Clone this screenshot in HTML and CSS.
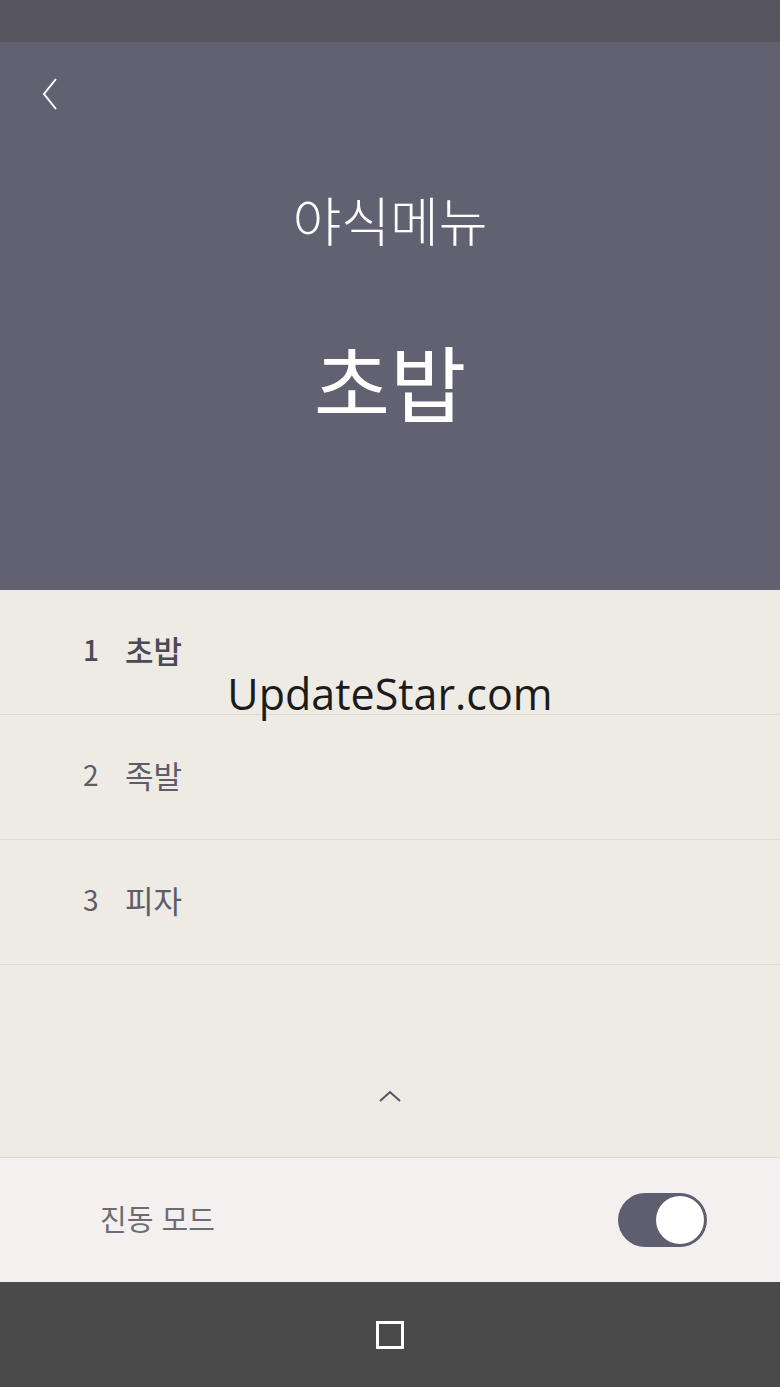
FILE: index.html
```html
<!DOCTYPE html>
<html lang="ko">
<head>
    <meta charset="UTF-8">
    <meta name="viewport" content="width=device-width, initial-scale=1.0">
    <title>야식메뉴</title>
    <link rel="stylesheet" href="styles.css">
</head>
<body>
    <div class="status-bar"></div>
    <div class="header">
        <button class="back-btn">
            <svg width="16" height="32" viewBox="0 0 16 32"><polyline points="14,1 2,16 14,31" fill="none" stroke="#fff" stroke-width="2"/></svg>
        </button>
        <div class="category">야식메뉴</div>
        <div class="picked">초밥</div>
    </div>
    <div class="menu-list">
        <div class="menu-item active"><span class="num">1</span><span class="name">초밥</span></div>
        <div class="menu-item"><span class="num">2</span><span class="name">족발</span></div>
        <div class="menu-item"><span class="num">3</span><span class="name">피자</span></div>
        <div class="list-footer">
            <svg width="22" height="12" viewBox="0 0 22 12"><polyline points="1,11 11,2 21,11" fill="none" stroke="#55545e" stroke-width="2"/></svg>
        </div>
        <div class="watermark">UpdateStar.com</div>
    </div>
    <div class="setting-row">
        <span class="setting-label">진동 모드</span>
        <div class="toggle on"><div class="knob"></div></div>
    </div>
    <div class="nav-bar">
        <div class="home-btn"></div>
    </div>
</body>
</html>
```

FILE: styles.css
```css
/* Layout for the menu picker screen */
body {
    margin: 0;
    width: 780px;
    height: 1387px;
    font-family: "Noto Sans CJK KR", "Noto Sans", sans-serif;
    background: #4a4a4a;
    overflow: hidden;
}
.status-bar {
    height: 42px;
    background: #57565f;
}
.header {
    height: 548px;
    background: #626172;
    display: flex;
    flex-direction: column;
    align-items: center;
    color: #fff;
}
.back-btn {
    align-self: flex-start;
    margin: 36px 0 0 42px;
    padding: 0;
    border: none;
    background: none;
    height: 32px;
}
.back-btn svg {
    display: block;
}
.category {
    margin-top: 79px;
    font-size: 53px;
    font-weight: 300;
    line-height: 60px;
}
.picked {
    margin-top: 86px;
    font-size: 83px;
    font-weight: 400;
    line-height: 90px;
}
.menu-list {
    position: relative;
    background: #eeebe5;
}
.menu-item {
    height: 124px;
    box-sizing: border-box;
    height: 125px;
    border-bottom: 1px solid #dedbd5;
    display: flex;
    align-items: center;
    padding: 0 0 6px 83px;
    font-size: 31px;
    color: #5d5c67;
}
.menu-item .num {
    width: 42px;
    font-size: 28px;
}
.menu-item.active {
    color: #4b4a58;
    font-weight: 500;
}
.list-footer {
    height: 192px;
    display: flex;
    justify-content: center;
    align-items: flex-start;
}
.list-footer svg {
    margin-top: 125px;
}
.watermark {
    position: absolute;
    top: 74px;
    left: 0;
    right: 0;
    text-align: center;
    font-family: "Open Sans", sans-serif;
    font-size: 43px;
    color: #1b1b1b;
}
.setting-row {
    height: 124px;
    border-top: 1px solid #dcd9d4;
    background: #f4f0ef;
    display: flex;
    align-items: center;
    justify-content: space-between;
    padding: 0 73px 0 100px;
}
.setting-label {
    font-size: 29px;
    color: #6d6c73;
    padding-bottom: 4px;
}
.toggle {
    width: 89px;
    height: 54px;
    border-radius: 27px;
    background: #5f5e70;
    display: flex;
    align-items: center;
    justify-content: flex-end;
    padding-right: 3px;
    box-sizing: border-box;
}
.knob {
    width: 48px;
    height: 48px;
    border-radius: 50%;
    background: #fff;
}
.nav-bar {
    height: 105px;
    background: #4a4a4a;
    display: flex;
    justify-content: center;
    align-items: center;
}
.home-btn {
    width: 22px;
    height: 22px;
    border: 3px solid #fff;
}
```
